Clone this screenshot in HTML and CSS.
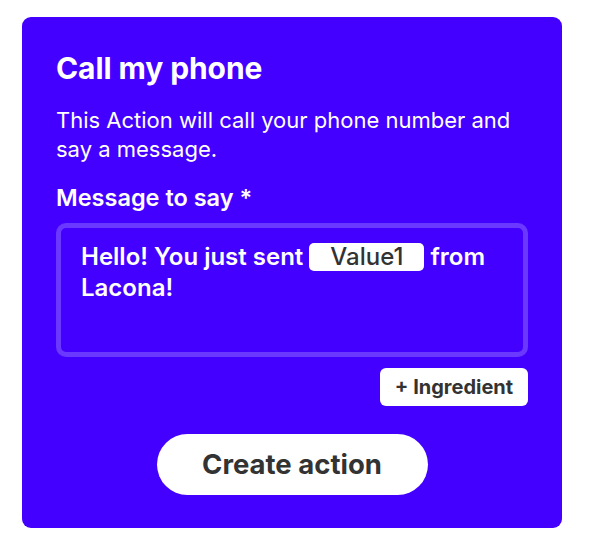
FILE: index.html
```html
<!DOCTYPE html>
<html>
<head>
<meta charset="utf-8">
<link rel="stylesheet" href="styles.css">
</head>
<body>
<div class="card">
  <h1 class="title">Call my phone</h1>
  <p class="desc">This Action will call your phone number and say a message.</p>
  <label class="label">Message to say *</label>
  <div class="field">
    <div class="field-text">Hello! You just sent <span class="pill">Value1</span> from Lacona!</div>
  </div>
  <div class="ingredient-row">
    <button class="ingredient">+ Ingredient</button>
  </div>
  <div class="action-row">
    <button class="create">Create action</button>
  </div>
</div>
</body>
</html>
```

FILE: styles.css
```css
* { box-sizing: border-box; }
html, body { margin: 0; padding: 0; background: #fff; }
body {
  font-family: "Inter", "Noto Sans", sans-serif;
  padding: 17px 0 0 22px;
}
.card {
  width: 540px;
  height: 511px;
  background: #4400ff;
  border-radius: 9px;
  padding: 33px 34px 0 34px;
  color: #fff;
  display: flex;
  flex-direction: column;
}
.title {
  margin: 0;
  font-size: 30px;
  font-weight: 700;
  line-height: 36px;
  letter-spacing: -0.1px;
}
.desc {
  margin: 19.5px 0 0 0;
  font-size: 22px;
  line-height: 29px;
  font-weight: 400;
}
.label {
  margin-top: 19px;
  font-size: 23.5px;
  font-weight: 600;
  line-height: 30px;
}
.field {
  margin-top: 10px;
  height: 134px;
  border: 5px solid #6a38ff;
  border-radius: 10px;
  padding: 13px 20px 0 20px;
}
.field-text {
  font-size: 24px;
  font-weight: 600;
  line-height: 31px;
}
.pill {
  display: inline-block;
  background: #fff;
  color: #333;
  font-weight: 500;
  border-radius: 5px;
  width: 115px;
  text-align: center;
  line-height: 28px;
}
.ingredient-row {
  display: flex;
  justify-content: flex-end;
  margin-top: 11px;
}
.ingredient {
  background: #fff;
  border: none;
  border-radius: 6px;
  height: 38px;
  width: 148px;
  font-family: inherit;
  font-size: 20px;
  font-weight: 700;
  color: #333;
  padding: 0;
}
.action-row {
  display: flex;
  justify-content: center;
  margin-top: 28px;
}
.create {
  background: #fff;
  border: none;
  border-radius: 31px;
  height: 61px;
  width: 271px;
  font-family: inherit;
  font-size: 27.5px;
  font-weight: 700;
  color: #333;
  padding: 0;
}
```
